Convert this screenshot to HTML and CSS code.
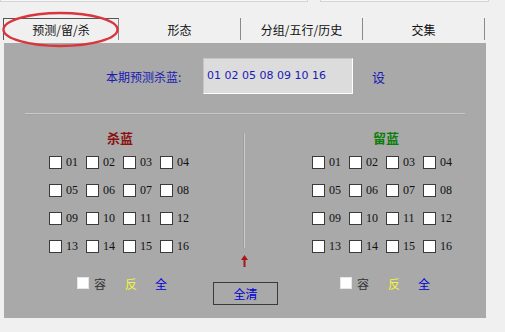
FILE: index.html
```html
<!DOCTYPE html>
<html lang="zh-CN">
<head>
	<meta charset="UTF-8">
	<meta name="viewport" content="width=device-width, initial-scale=1.0">
	<title>预测/留/杀</title>
	<link rel="stylesheet" href="styles.css">
</head>
<body>
	<div class="topbar">
		<div class="topbox wide"></div>
		<div class="topbox narrow"></div>
	</div>
	<div class="tabs">
		<div class="tab active">预测/留/杀</div>
		<div class="tab">形态</div>
		<div class="tab">分组/五行/历史</div>
		<div class="tab">交集</div>
		<svg class="ring" width="124" height="42" viewBox="0 0 124 42">
			<ellipse cx="60.5" cy="19.5" rx="57" ry="16.5" fill="none" stroke="#d8363c" stroke-width="2.4"/>
		</svg>
	</div>
	<div class="panel">
		<div class="predict">
			<span class="predict-label">本期预测杀蓝:</span>
			<div class="predict-box">01 02 05 08 09 10 16</div>
			<span class="set">设</span>
		</div>
		<div class="sep"></div>
		<div class="pick">
			<div class="group">
				<div class="group-title kill">杀蓝</div>
				<div class="nums" id="killnums"></div>
				<div class="opts">
					<span class="cb-light"></span>
					<span class="opt rong">容</span>
					<span class="opt fan">反</span>
					<span class="opt quan">全</span>
				</div>
			</div>
			<div class="middle">
				<div class="vline"></div>
				<svg class="arrow" width="7" height="12" viewBox="0 0 7 12">
					<path d="M3.5 0 L7 5 H4.5 V12 H2.5 V5 H0 Z" fill="#a8161c"/>
				</svg>
				<button class="clear">全清</button>
			</div>
			<div class="group right">
				<div class="group-title keep">留蓝</div>
				<div class="nums" id="keepnums"></div>
				<div class="opts">
					<span class="cb-light"></span>
					<span class="opt rong">容</span>
					<span class="opt fan">反</span>
					<span class="opt quan">全</span>
				</div>
			</div>
		</div>
	</div>
	<script>
		function fill(id){
			var box = document.getElementById(id);
			for (var i = 1; i <= 16; i++) {
				var n = document.createElement("div");
				n.className = "num";
				n.innerHTML = '<span class="cb"></span><span class="lbl">' + (i < 10 ? '0' + i : i) + '</span>';
				box.appendChild(n);
			}
		}
		fill("killnums");
		fill("keepnums");
	</script>
</body>
</html>
```

FILE: styles.css
```css
body{
	margin: 0;
	background-color: #f0f0f0;
	font-family: "Noto Sans CJK SC", "Liberation Sans", sans-serif;
	font-size: 12px;
	width: 505px;
	height: 332px;
	overflow: hidden;
}
.topbar{
	display: flex;
	height: 2px;
	gap: 12px;
}
.topbox{
	box-sizing: border-box;
	background-color: #f7f7f7;
	border-bottom: 1px solid #d4d4d4;
	border-right: 1px solid #d4d4d4;
	border-left: 1px solid #d4d4d4;
}
.wide{ width: 308px; }
.narrow{ width: 169px; }

.tabs{
	position: relative;
	display: flex;
	margin-top: 16px;
	height: 22px;
}
.tab{
	width: 121px;
	border-right: 1px solid #8a8a8a;
	text-align: center;
	line-height: 21px;
	padding-top: 1px;
	color: #111;
}
.tab.active{
	width: 114px;
	margin-left: 3px;
	border-left: 1px solid #555;
	border-top: 1px solid #555;
	box-sizing: content-box;
	height: 21px;
	padding-top: 0;
}
.ring{
	position: absolute;
	left: 0;
	top: -8px;
	z-index: 2;
}

.panel{
	margin-top: 3px;
	margin-left: 4px;
	width: 482px;
	height: 275px;
	background-color: #a9a9a9;
	padding-top: 15px;
	box-sizing: border-box;
}
.predict{
	display: flex;
	align-items: center;
	height: 36px;
	padding-left: 102px;
}
.predict-label{
	width: 97px;
	color: #1a1ab4;
	font-size: 12px;
}
.predict-box{
	box-sizing: border-box;
	width: 150px;
	height: 36px;
	background-color: #dcdcdc;
	border-top: 1px solid #c4c4c4;
	border-left: 1px solid #c4c4c4;
	border-right: 1px solid #fff;
	border-bottom: 1px solid #fff;
	padding-left: 3px;
	line-height: 34px;
	font-family: "DejaVu Sans", sans-serif;
	font-size: 11px;
	color: #1a1ab4;
	white-space: nowrap;
}
.set{
	margin-left: 19px;
	color: #1a1ab4;
	font-size: 13px;
}
.sep{
	margin: 19px 21px 0 21px;
	border-top: 1px solid #c9c9c9;
	border-bottom: 1px solid #a1a1a1;
}

.pick{
	display: flex;
	margin-top: 12px;
}
.group{
	margin-left: 45px;
	width: 148px;
}
.group.right{
	margin-left: 21px;
}
.group-title{
	height: 21px;
	line-height: 21px;
	text-align: center;
	font-size: 13px;
	font-weight: bold;
}
.kill{
	color: #8b1010;
	padding-right: 6px;
}
.keep{
	color: #0a7d0a;
}
.nums{
	display: grid;
	grid-template-columns: repeat(4, 37px);
	grid-auto-rows: 28px;
	align-items: center;
}
.num{
	display: flex;
	align-items: center;
}
.cb{
	box-sizing: border-box;
	width: 13px;
	height: 13px;
	background-color: #fff;
	border: 1px solid #3a3a3a;
	margin-right: 4px;
}
.lbl{
	font-family: "Liberation Serif", serif;
	font-size: 12px;
	color: #111;
}
.opts{
	display: flex;
	align-items: center;
	margin-top: 16px;
	height: 14px;
	padding-left: 28px;
}
.cb-light{
	box-sizing: border-box;
	width: 12px;
	height: 12px;
	background-color: #fff;
	border: 1px solid #e6e6e6;
}
.opt{
	font-size: 12px;
}
.rong{
	margin-left: 5px;
	color: #333;
}
.fan{
	margin-left: 19px;
	color: #f2f23a;
}
.quan{
	margin-left: 18px;
	color: #0000d6;
}

.middle{
	width: 94px;
	display: flex;
	flex-direction: column;
	align-items: center;
}
.vline{
	margin-top: 6px;
	width: 1px;
	height: 115px;
	background-color: #c8c8c8;
	border-left: 1px solid #9e9e9e;
}
.arrow{
	margin-top: 7px;
}
.clear{
	margin-top: 15px;
	margin-left: 3px;
	width: 65px;
	height: 23px;
	padding: 0;
	background-color: #a9a9a9;
	border: 1px solid #3a3a3a;
	font-family: "Noto Sans CJK SC", sans-serif;
	font-size: 12px;
	color: #0000d6;
}
```
